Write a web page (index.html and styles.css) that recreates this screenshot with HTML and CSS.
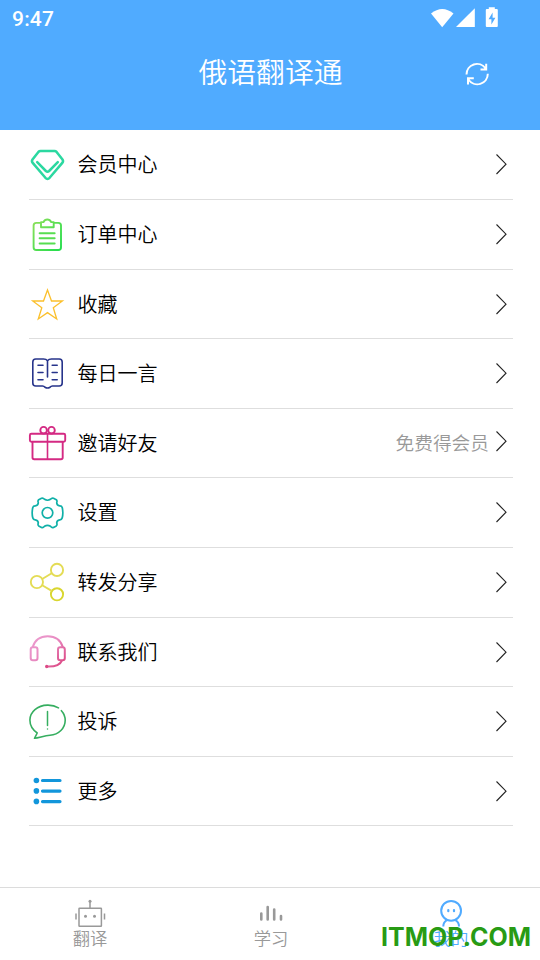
FILE: index.html
```html
<!DOCTYPE html>
<html lang="zh-CN">
<head>
<meta charset="utf-8">
<title>俄语翻译通</title>
<link rel="stylesheet" href="styles.css">
</head>
<body>
<svg class="defs" width="0" height="0">
  <defs>
    <symbol id="chevron" viewBox="0 0 12 22"><path d="M.5 1.500 10 11.200 .5 21" fill="none" stroke="#222" stroke-width="1.100"/></symbol>
    <linearGradient id="lime" x1="0" y1="0" x2="1" y2="1"><stop offset="0" stop-color="#8ee05a"/><stop offset="1" stop-color="#22dd4c"/></linearGradient>
    <linearGradient id="pink" gradientUnits="userSpaceOnUse" x1="0" y1="4" x2="30" y2="36"><stop offset="0" stop-color="#eda0d2"/><stop offset=".5" stop-color="#e88bc2"/><stop offset="1" stop-color="#dc4a86"/></linearGradient>
  </defs>
</svg>
<div class="app">
  <header class="header">
    <div class="status">
      <span class="time">9:47</span>
      <svg class="status-icons" width="70" height="22" viewBox="0 0 70 22" fill="#fff">
        <path d="M1 7.500Q12.200-1.500 23.500 7.500L12.200 21.200Z"/>
        <path d="M44.800 2.200V21H26Z"/>
        <path fill-rule="evenodd" d="M58.800 1.300h6v1.700h2q1 0 1 1v16q0 1-1 1h-10q-1 0-1-1V4q0-1 1-1h2ZM62.600 6.500 58.600 13.200h2.800v5.300l4-6.800h-2.800Z"/>
      </svg>
    </div>
    <div class="titlebar">
      <h1>俄语翻译通</h1>
      <svg class="refresh" width="26" height="26" viewBox="0 0 26 26" fill="none" stroke="#fff" stroke-width="2">
        <path d="M2.500 13.500A10.500 10.500 0 0 1 21.500 7.300M22.200 2.800V8.500H16.500M23.800 12.800A10.500 10.500 0 0 1 4.500 18.500M4 23.500V17.300H9.800"/>
      </svg>
    </div>
  </header>
  <main class="menu">
    <div class="row">
      <svg class="icon" viewBox="0 0 40 40" fill="none" stroke="#2bd8a0" stroke-width="2.500" stroke-linejoin="round" stroke-linecap="round"><path d="M13.500 5.900H27.500Q28.700 5.900 29.600 6.900L35.500 14.500Q36.700 16.200 35.300 17.900L22.600 32.800Q20.500 35 18.400 32.800L5.700 17.900Q4.300 16.200 5.500 14.500L11.400 6.900Q12.300 5.900 13.500 5.900Z"/><path d="M10.200 17.200 18.900 26Q20.500 27.500 22.100 26L30.800 17.200"/></svg>
      <span class="label">会员中心</span><svg class="chevron"><use href="#chevron"/></svg>
    </div>
    <div class="row">
      <svg class="icon" viewBox="0 0 40 40" fill="none" stroke="url(#lime)" stroke-width="1.900" stroke-linejoin="round"><path d="M14 7.900H9.300Q6.600 7.900 6.600 10.600V32.200Q6.600 35 9.300 35H31.300Q34 35 34 32.200V10.600Q34 7.900 31.300 7.900H26.700M14 12.200V7.100H16.500Q17.600 4.500 20.300 4.500T24.200 7.100H26.700V12.200Z"/><path stroke="#57dd50" stroke-linecap="round" d="M12.600 18.300H27.700M12.600 23.300H27.700M12.600 28.500H27.700"/></svg>
      <span class="label">订单中心</span><svg class="chevron"><use href="#chevron"/></svg>
    </div>
    <div class="row short">
      <svg class="icon" viewBox="0 0 40 40" fill="none" stroke="#fbc02d" stroke-width="1.300"><path d="M20.500 5 24.500 16H35.400L26.300 22.800 29.700 34 20.500 27.600 11.300 34 14.800 22.800 5.700 16H16.500Z"/></svg>
      <span class="label">收藏</span><svg class="chevron"><use href="#chevron"/></svg>
    </div>
    <div class="row">
      <svg class="icon" viewBox="0 0 40 40" fill="none" stroke="#27348b" stroke-width="1.600" stroke-linejoin="round" stroke-linecap="round"><path d="M20.500 23V6.800Q19.200 5 16.500 5H8.800Q5.800 5 5.800 8V29Q5.800 32 8.800 32H15.600Q17 32 18 33.300 20.500 34.800 23 33.300 24 32 25.400 32H32.200Q35.200 32 35.200 29V8Q35.200 5 32.200 5H24.500Q21.800 5 20.500 6.800M11 11.300H16M11 18.500H16M11 25.700H16M25.200 11.300H30.200M25.200 18.500H30.200M25.200 25.700H30.200"/></svg>
      <span class="label">每日一言</span><svg class="chevron"><use href="#chevron"/></svg>
    </div>
    <div class="row short gift">
      <svg class="icon" viewBox="0 0 40 40" fill="none" stroke="#d42a83" stroke-width="1.900"><rect x="2.900" y="9.700" width="35.300" height="8" rx="1.500"/><path d="M5.500 17.700V33.500Q5.500 35.200 7.200 35.200H34Q35.700 35.200 35.700 33.500V17.700"/><path stroke-width="1.600" d="M20.500 9.700V35"/><circle cx="16.600" cy="6.200" r="3.300"/><circle cx="24.500" cy="6.200" r="3.300"/></svg>
      <span class="label">邀请好友</span><span class="note">免费得会员</span><svg class="chevron"><use href="#chevron"/></svg>
    </div>
    <div class="row">
      <svg class="icon" viewBox="0 0 40 40" fill="none" stroke="#10b0a8" stroke-width="1.700" stroke-linejoin="round"><circle cx="20.500" cy="19.800" r="5.300"/><path d="M17.500 6.300Q20.500 8.200 23.500 6.300Q24.800 4.600 26.500 5.200L29.300 6.700Q30.500 7.700 29.700 9.700Q29.800 12.400 32.700 12.800Q34.700 12.700 35.200 14.500Q36.500 19.800 35.200 25.100Q34.700 26.900 32.700 26.800Q29.800 27.200 29.700 29.900Q30.500 31.900 29.300 32.900L26.500 34.400Q24.800 35 23.500 33.300Q20.500 31.400 17.500 33.300Q16.200 35 14.500 34.400L11.700 32.900Q10.500 31.900 11.300 29.900Q11.200 27.200 8.300 26.800Q6.300 26.900 5.800 25.100Q4.500 19.800 5.800 14.500Q6.300 12.700 8.300 12.800Q11.200 12.400 11.300 9.700Q10.500 7.700 11.700 6.700L14.500 5.200Q16.200 4.600 17.500 6.300Z"/></svg>
      <span class="label">设置</span><svg class="chevron"><use href="#chevron"/></svg>
    </div>
    <div class="row">
      <svg class="icon" viewBox="0 0 40 40" fill="none" stroke="#e4dc55" stroke-width="1.900"><circle cx="30" cy="6.900" r="6.100"/><circle cx="9.900" cy="19" r="6.100"/><circle cx="30" cy="31.300" r="6.100" stroke="#d9d62f"/><path d="M15.200 16 24.700 10.200M15.200 22.300 24.700 27.900"/></svg>
      <span class="label">转发分享</span><svg class="chevron"><use href="#chevron"/></svg>
    </div>
    <div class="row short">
      <svg class="icon" viewBox="0 0 40 40" fill="none" stroke="url(#pink)" stroke-width="2"><rect x="3.700" y="14.300" width="6.800" height="13" rx="2.200"/><rect x="31" y="14.300" width="6.800" height="13" rx="2.200"/><path d="M5.600 14.300C8 6.500 13.500 3.200 20.700 3.200S33.500 6.500 35.900 14.300M35 27.300C33.500 31.200 28 33.800 20 33.500"/><circle cx="19.700" cy="33.500" r="1.700" fill="#dc4a86" stroke="none"/></svg>
      <span class="label">联系我们</span><svg class="chevron"><use href="#chevron"/></svg>
    </div>
    <div class="row">
      <svg class="icon" viewBox="0 0 40 40" fill="none" stroke="#36ae60" stroke-width="1.600" stroke-linejoin="round" stroke-linecap="round"><path d="M31.500 5.900C28.500 4 24.500 3 20.500 3.100C10.500 3.300 2.900 9.800 2.900 18.100C2.900 23.500 5.800 28 10.200 31L7.500 36.300C12 35.800 17.500 33.700 23 33.300C31.800 32.600 38.200 26.300 38.200 18.300C38.200 14.600 36.800 11.300 34.400 8.700"/><path stroke-width="1.500" d="M20.500 9.500V23.500M20.500 27V27.100"/></svg>
      <span class="label">投诉</span><svg class="chevron"><use href="#chevron"/></svg>
    </div>
    <div class="row short">
      <svg class="icon" viewBox="0 0 40 40" fill="#1296db" stroke="#1296db" stroke-width="3.200" stroke-linecap="round"><g stroke="none"><circle cx="9.400" cy="8.500" r="2.800"/><circle cx="9.400" cy="18.900" r="2.800"/><circle cx="9.400" cy="29.400" r="2.800"/></g><path d="M15.500 8.500H33M15.500 19.100H33M15.500 29.600H33"/></svg>
      <span class="label">更多</span><svg class="chevron"><use href="#chevron"/></svg>
    </div>
  </main>
  <nav class="tabs">
    <div class="tab">
      <svg width="32" height="32" viewBox="0 0 32 32" fill="none" stroke="#999" stroke-width="1.500"><rect x="5" y="10.200" width="22.400" height="18" rx=".5"/><path d="M16 10V3.500M2 15.500V21.500M30.500 15.500V21.500"/><g fill="#999" stroke="none"><circle cx="16" cy="3.300" r="1.500"/><circle cx="11.500" cy="18.200" r="1.500"/><circle cx="20.500" cy="18.200" r="1.500"/></g></svg>
      <span>翻译</span>
    </div>
    <div class="tab">
      <svg width="32" height="32" viewBox="0 0 32 32" fill="none" stroke="#999" stroke-width="2.600" stroke-linecap="round"><path d="M6.300 15.500V21.500M12.700 9V21.500M19.200 11.500V21.500M26 18V21.500"/></svg>
      <span>学习</span>
    </div>
    <div class="tab active">
      <svg width="32" height="32" viewBox="0 0 32 32" fill="none" stroke="#50abff" stroke-width="2"><circle cx="16.100" cy="12.800" r="9.900"/><path stroke-width="2.200" stroke-linecap="round" d="M13.300 12V13.200M19 12V13.200"/><path d="M8.300 28.500Q8.300 24.500 11.800 22.200M24 28.500Q24 24.500 20.500 22.200"/></svg>
      <span>我的</span>
    </div>
    <div class="watermark">ITMOP.COM</div>
  </nav>
</div>
</body>
</html>
```

FILE: styles.css
```css
* { box-sizing: border-box; }
body {
  margin: 0;
  background: #fff;
  font-family: "Noto Sans CJK SC", sans-serif;
  font-weight: 350;
  color: #000;
}
.defs { position: absolute; }
.app {
  width: 540px;
  height: 960px;
  display: flex;
  flex-direction: column;
  overflow: hidden;
}
.header { height: 130px; flex: none; background: #50abff; color: #fff; }
.status {
  height: 38px;
  padding: 0 40px 0 12px;
  display: flex;
  justify-content: space-between;
  align-items: flex-start;
}
.time { font: 500 21px/24px Roboto, sans-serif; padding-top: 7px; letter-spacing: .2px; }
.status-icons { margin-top: 6px; }
.titlebar {
  display: grid;
  grid-template-columns: 1fr auto 1fr;
  align-items: center;
  height: 72px;
  padding-left: 1px;
}
h1 { grid-column: 2; margin: 0; padding-bottom: 6px; font-size: 28.800px; line-height: 42px; font-weight: 350; }
.refresh { margin-left: 121px; }
.menu { flex: 1; padding: 0 27px 0 29px; }
.row {
  height: 70px;
  display: flex;
  align-items: flex-start;
  border-bottom: 1px solid #dedede;
}
.short { height: 69px; }
.icon { width: 40px; height: 40px; margin: 15px 10.500px 0 -2px; flex: none; overflow: visible; }
.label { flex: 1; font-size: 20px; line-height: 30px; padding-top: 19px; }
.note { font-size: 18.700px; line-height: 28px; padding: 19px 7px 0 0; color: #999; }
.chevron { width: 12px; height: 22px; margin: 23px 5px 0 0; flex: none; }
.gift .chevron { margin-top: 21px; }
.tabs {
  position: relative;
  display: flex;
  height: 73px;
  flex: none;
  border-top: 1px solid #dcdcdc;
}
.tab {
  flex: none;
  width: 180px;
  display: flex;
  flex-direction: column;
  align-items: center;
  padding: 10px 0 0 2px;
  color: #999;
  font-size: 17.300px;
  line-height: 24px;
}
.tab:first-child { padding-left: 0; }
.tab svg { flex: none; margin-bottom: -4px; }
.active { color: #50abff; }
.watermark {
  position: absolute;
  right: 9px;
  top: 34px;
  color: #289b14;
  font: 700 25px/30px Inter, sans-serif;
}
```
